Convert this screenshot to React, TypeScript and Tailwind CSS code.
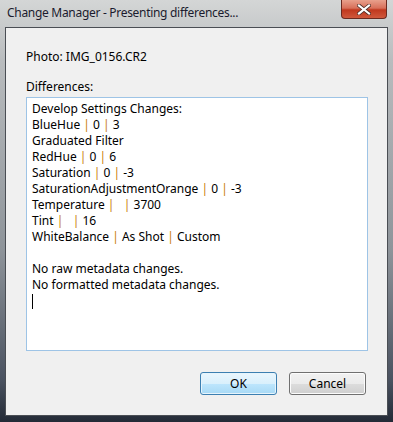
import React from "react";

const P = () => <span className="text-[#c87d0e]">|</span>;

export default function App() {
  const lines: React.ReactNode[] = [
    "Develop Settings Changes:",
    <>BlueHue <P /> 0 <P /> 3</>,
    "Graduated Filter",
    <>RedHue <P /> 0 <P /> 6</>,
    <>Saturation <P /> 0 <P /> -3</>,
    <>SaturationAdjustmentOrange <P /> 0 <P /> -3</>,
    <>Temperature <P /> &nbsp; <P /> 3700</>,
    <>Tint <P /> &nbsp; <P /> 16</>,
    <>WhiteBalance <P /> As Shot <P /> Custom</>,
    "\u00a0",
    "No raw metadata changes.",
    "No formatted metadata changes.",
  ];
  return (
    <div
      className="w-[393px] h-[422px] overflow-hidden relative flex flex-col bg-[linear-gradient(180deg,#d4d6d6_0px,#b9bcbe_60px,#8e949a_250px,#4a5260_380px,#232a36_422px)] text-[12px] text-black"
      style={{ fontFamily: '"Segoe UI", "Noto Sans", sans-serif' }}
    >
      <div className="h-[27px] shrink-0 flex items-start pl-[7px] pt-[5px] text-[#1b1b2e]">
        <span className="leading-[16px] tracking-[-0.3px]">Change Manager - Presenting differences...</span>
      </div>
      <div className="absolute right-[6px] top-0 w-[46px] h-[19px] rounded-b-[4px] border border-[#6b2a20] border-t-0 bg-[linear-gradient(180deg,#e8a08c_0%,#d8705a_45%,#c0381e_55%,#d0583c_100%)] flex items-center justify-center">
        <svg width="14" height="11" viewBox="0 0 14 11">
          <path d="M2 1.5 L12 9.5 M12 1.5 L2 9.5" stroke="#4a2a24" strokeWidth="3.6" strokeLinecap="square" />
          <path d="M2 1.5 L12 9.5 M12 1.5 L2 9.5" stroke="#ffffff" strokeWidth="2.2" strokeLinecap="square" />
        </svg>
      </div>
      <div className="mx-[5px] mb-[6px] flex-1 border border-[#4a4e54] bg-[#f0f0f0] flex flex-col">
        <div className="pl-[20px] pt-[21px] leading-[16px]">Photo: IMG_0156.CR2</div>
        <div className="pl-[20px] pt-[14px] leading-[16px]">Differences:</div>
        <div className="ml-[20px] mr-[19px] mt-[2px] h-[254px] bg-white border border-[#9ec4e6] px-[5px] pt-[3px] leading-[16px]">
          {lines.map((l, i) => (
            <div key={i} className="whitespace-pre">{l}</div>
          ))}
          <div className="w-px h-[15px] bg-black mt-[1px]" />
        </div>
        <div className="flex justify-end gap-[12px] mr-[21px] mt-[21px]">
          <button className="w-[77px] h-[23px] rounded-[3px] border border-[#3c7fb1] bg-[linear-gradient(180deg,#eaf6fd_0%,#d9f0fc_50%,#bee6fd_50%,#a7d9f5_100%)] shadow-[inset_0_0_0_1px_#e6f4fc]">OK</button>
          <button className="w-[77px] h-[23px] rounded-[3px] border border-[#707070] bg-[linear-gradient(180deg,#f2f2f2_0%,#ebebeb_50%,#dddddd_50%,#cfcfcf_100%)] shadow-[inset_0_0_0_1px_#fcfcfc]">Cancel</button>
        </div>
      </div>
    </div>
  );
}
